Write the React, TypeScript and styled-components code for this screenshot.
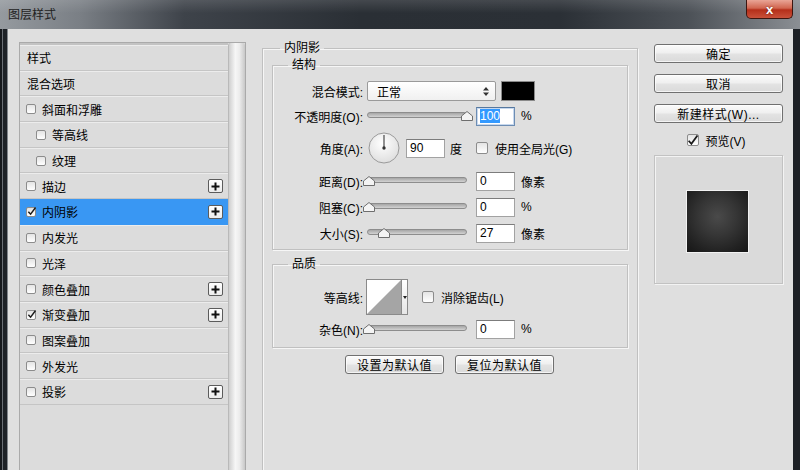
import React from 'react'
import styled, { createGlobalStyle } from 'styled-components'

const GlobalStyle = createGlobalStyle`
  html, body {
    margin: 0;
    padding: 0;
    background: #1f2328;
  }
`

const Page = styled.div`
  width: 800px;
  height: 470px;
  display: flex;
  flex-direction: column;
  overflow: hidden;
  background: #1d2126;
  font-family: "Liberation Sans", "Noto Sans CJK SC", sans-serif;
  font-size: 12px;
  color: #000;
`

const TitleBar = styled.div`
  height: 29px;
  flex: none;
  display: flex;
  align-items: flex-start;
  background:
    linear-gradient(180deg, rgba(255,255,255,0.12) 0%, rgba(255,255,255,0) 45%),
    linear-gradient(90deg, #959a9f 0%, #7a7f85 10%, #3e434a 23%, #2a2f35 45%, #2b3036 70%, #4c5157 86%, #8b8f94 100%);
`

const Title = styled.div`
  padding: 7px 0 0 8px;
  line-height: 16px;
  color: #222;
`

const CloseButton = styled.div`
  margin-left: auto;
  margin-right: 7px;
  width: 47px;
  height: 19px;
  box-sizing: border-box;
  display: flex;
  align-items: center;
  justify-content: center;
  border: 1px solid #3d1610;
  border-top: none;
  border-radius: 0 0 5px 5px;
  background: linear-gradient(180deg, #e9a596 0%, #d16650 45%, #b52f1a 55%, #c9513a 100%);
  color: #fff;
  font-weight: bold;
  font-size: 13px;
  text-shadow: 0 0 2px #5a1a10;
`

const Frame = styled.div`
  flex: 1;
  display: flex;
  padding: 0 7px;
  min-height: 0;
  background: linear-gradient(90deg, #15181c 0px, #15181c 2px, #6a6f75 2px, #6a6f75 3px, #1d2126 3px);
`

const Body = styled.div`
  flex: 1;
  display: flex;
  align-items: stretch;
  padding: 11px 0 0 11px;
  background: #dfdfdf;
  border-left: 1px solid #80858b;
  overflow: hidden;
`

/* ---------- left list ---------- */

const StylePanel = styled.div`
  width: 227px;
  box-sizing: border-box;
  margin-top: 2px;
  display: flex;
  border: 1px solid #aaaaaa;
  border-bottom: none;
  background: #dcdcdc;
`

const StyleList = styled.div`
  flex: 1;
  border-top: 2px solid #c3c3c3;
`

const StyleItem = styled.div<{ $indent: number; $active?: boolean }>`
  height: 25.7px;
  box-sizing: border-box;
  display: flex;
  align-items: center;
  padding-left: ${({ $indent }) => $indent}px;
  border-top: 1px solid ${({ $active }) => ($active ? '#3a97f2' : '#ececec')};
  border-bottom: 1px solid ${({ $active }) => ($active ? '#3a97f2' : '#c5c5c5')};
  background: ${({ $active }) => ($active ? '#3997f3' : 'transparent')};
  white-space: nowrap;
`

const ItemLabel = styled.span`
  margin-left: 6px;
`

const PlusButton = styled.div`
  margin-left: auto;
  margin-right: 5px;
  width: 15px;
  height: 14px;
  box-sizing: border-box;
  border: 1px solid #5c5c5c;
  border-radius: 2px;
  background: linear-gradient(180deg, #ffffff, #ececec);
  display: flex;
  align-items: center;
  justify-content: center;
`

const Scrollbar = styled.div`
  width: 16px;
  border-left: 1px solid #b9b9b9;
  border-radius: 3px 3px 0 0;
  background: linear-gradient(90deg, #cfcfcf 0%, #f6f6f6 40%, #ececec 65%, #c8c8c8 100%);
`

/* ---------- checkbox ---------- */

const Box = styled.span<{ $size: number }>`
  display: inline-flex;
  align-items: center;
  justify-content: center;
  flex: none;
  width: ${({ $size }) => $size}px;
  height: ${({ $size }) => $size}px;
  box-sizing: border-box;
  border: 1px solid #8c8c8c;
  border-radius: 2px;
  background: linear-gradient(180deg, #e4e4e4, #ffffff);
`

const CheckBox = ({ checked, size = 10 }: { checked?: boolean; size?: number }) => (
  <Box $size={size}>
    {checked && (
      <svg width={size - 1} height={size - 1} viewBox="0 0 10 10" style={{ overflow: 'visible' }}>
        <path d="M1.5 5.2 L4 8 L9.5 0.5" fill="none" stroke="#1a1a1a" strokeWidth="1.6" />
      </svg>
    )}
  </Box>
)

/* ---------- middle column ---------- */

const Middle = styled.div`
  width: 376px;
  margin-left: 16px;
  display: flex;
  flex-direction: column;
`

const Group = styled.fieldset<{ $pad?: string }>`
  margin: 0;
  padding: ${({ $pad }) => $pad || '0'};
  min-width: 0;
  border: 1px solid #c0c0c0;
  box-shadow: 1px 1px 0 #f6f6f6, inset 1px 1px 0 #f6f6f6;
`

const OuterGroup = styled(Group)`
  flex: 1;
  margin-bottom: -6px;
`

const QualityGroup = styled(Group)`
  margin-top: 6px;
`

const Legend = styled.legend<{ $offset: number }>`
  margin-left: ${({ $offset }) => $offset}px;
  padding: 0 4px;
  line-height: 16px;
  height: 16px;
`

const Row = styled.div<{ $h: number }>`
  height: ${({ $h }) => $h}px;
  display: grid;
  grid-template-columns: 90px 1fr;
  column-gap: 4px;
  align-items: center;
`

const RowLabel = styled.span`
  text-align: right;
  white-space: nowrap;
`

const Controls = styled.div`
  display: flex;
  align-items: center;
  white-space: nowrap;
`

const Select = styled.div`
  width: 129px;
  height: 20px;
  box-sizing: border-box;
  display: flex;
  align-items: center;
  padding: 0 6px 0 9px;
  border: 1px solid #9a9a9a;
  border-radius: 2px;
  background: linear-gradient(180deg, #ffffff, #f0f0f0);
  justify-content: space-between;
`

const Swatch = styled.div`
  width: 34px;
  height: 20px;
  box-sizing: border-box;
  margin-left: 5px;
  border: 1px solid #8a8a8a;
  background: #000;
`

const SliderBox = styled.div<{ $w: number }>`
  position: relative;
  width: ${({ $w }) => $w}px;
  height: 10px;
  flex: none;
`

const Track = styled.div`
  position: absolute;
  left: 0;
  right: 0;
  top: 1px;
  height: 4px;
  border: 1px solid #8d8d8d;
  border-radius: 3px;
  background: linear-gradient(180deg, #a6a6a6, #d2d2d2);
`

const Thumb = styled.svg`
  position: absolute;
  top: 0;
  margin-left: -6px;
`

const Slider = ({ value, width = 100 }: { value: number; width?: number }) => (
  <SliderBox $w={width}>
    <Track />
    <Thumb
      width="12"
      height="10"
      viewBox="0 0 12 10"
      style={{ left: `${2 + (value / 100) * (width - 2)}px` }}
    >
      <path d="M6 0.5 L11.5 5 L11.5 9.5 L0.5 9.5 L0.5 5 Z" fill="#f4f4f4" stroke="#6e6e6e" />
    </Thumb>
  </SliderBox>
)

const ValueBox = styled.div<{ $focus?: boolean; $gap?: number }>`
  width: 39px;
  height: 19px;
  box-sizing: border-box;
  margin-left: ${({ $gap }) => ($gap ?? 9)}px;
  padding: 0 3px;
  line-height: 17px;
  background: #fff;
  border: 1px solid ${({ $focus }) => ($focus ? '#6d8db3' : '#a2a2a2')};
  border-top-color: ${({ $focus }) => ($focus ? '#56789f' : '#7c7c7c')};
  box-shadow: ${({ $focus }) => ($focus ? 'inset 0 0 0 1px #c7d8ee' : 'none')};
`

const Selected = styled.span`
  background: #3399ff;
  color: #fff;
`

const Unit = styled.span<{ $gap?: number }>`
  margin-left: ${({ $gap }) => ($gap ?? 6)}px;
`

const InlineCheck = styled.label<{ $gap: number }>`
  display: flex;
  align-items: center;
  gap: 7px;
  margin-left: ${({ $gap }) => $gap}px;
`

const Contour = styled.div`
  display: flex;
  height: 36px;
  flex: none;
  margin-left: -1px;
`

const ContourSwatch = styled.div`
  width: 36px;
  height: 36px;
  box-sizing: border-box;
  border: 1px solid #8a8a8a;
  background: #fff;
`

const ContourArrow = styled.div`
  width: 6px;
  box-sizing: border-box;
  border: 1px solid #8a8a8a;
  border-left: none;
  background: linear-gradient(180deg, #ffffff, #e6e6e6);
  display: flex;
  align-items: center;
  justify-content: center;
`

const ButtonRow = styled.div`
  display: flex;
  justify-content: center;
  gap: 11px;
  margin-top: 7px;
  padding-right: 1px;
`

const Button = styled.div<{ $w?: number }>`
  width: ${({ $w }) => ($w ? `${$w}px` : '100%')};
  height: 19px;
  box-sizing: border-box;
  display: flex;
  align-items: center;
  justify-content: center;
  border: 1px solid #707070;
  border-radius: 3px;
  background: linear-gradient(180deg, #fbfbfb 0%, #efefef 48%, #e3e3e3 52%, #dadada 100%);
  box-shadow: inset 0 0 0 1px rgba(255,255,255,0.7);
  white-space: nowrap;
  letter-spacing: 0.5px;
`

/* ---------- right column ---------- */

const Side = styled.div`
  width: 129px;
  margin-left: 16px;
  padding-top: 4px;
  display: flex;
  flex-direction: column;
  gap: 11px;
`

const PreviewToggle = styled.label`
  height: 18px;
  margin-top: -3px;
  display: flex;
  align-items: center;
  justify-content: center;
  gap: 7px;
  padding-right: 5px;
`

const PreviewFrame = styled.div`
  height: 129px;
  margin-top: -5px;
  box-sizing: border-box;
  display: flex;
  align-items: center;
  justify-content: center;
  padding: 4px 3px 0 0;
  border: 1px solid #c2c2c2;
  box-shadow: inset 1px 1px 0 #f3f3f3, 1px 1px 0 #f3f3f3;
  background: #dadada;
`

const PreviewSquare = styled.div`
  width: 63px;
  height: 63px;
  box-sizing: border-box;
  border: 1px solid #f2f2f2;
  background: radial-gradient(circle at 50% 42%, #4a4a4a 0%, #363636 40%, #222 75%, #161616 100%);
`

const Dial = () => (
  <svg width="32" height="32" viewBox="0 0 32 32" style={{ flex: 'none', marginLeft: 1 }}>
    <defs>
      <radialGradient id="dialFill" cx="45%" cy="35%" r="70%">
        <stop offset="0%" stopColor="#ffffff" />
        <stop offset="100%" stopColor="#dcdcdc" />
      </radialGradient>
    </defs>
    <circle cx="16" cy="16" r="15" fill="url(#dialFill)" stroke="#9a9a9a" />
    <line x1="16" y1="16" x2="16" y2="3" stroke="#4a4a4a" strokeWidth="1.2" />
    <circle cx="16" cy="16" r="1.7" fill="#333" />
  </svg>
)

type Item = {
  label: string
  head?: boolean
  sub?: boolean
  checked?: boolean
  plus?: boolean
  active?: boolean
}

const items: Item[] = [
  { label: '样式', head: true },
  { label: '混合选项', head: true },
  { label: '斜面和浮雕' },
  { label: '等高线', sub: true },
  { label: '纹理', sub: true },
  { label: '描边', plus: true },
  { label: '内阴影', checked: true, plus: true, active: true },
  { label: '内发光' },
  { label: '光泽' },
  { label: '颜色叠加', plus: true },
  { label: '渐变叠加', checked: true, plus: true },
  { label: '图案叠加' },
  { label: '外发光' },
  { label: '投影', plus: true },
]

const Plus = () => (
  <PlusButton>
    <svg width="9" height="9" viewBox="0 0 9 9">
      <path d="M4.5 0.5 V8.5 M0.5 4.5 H8.5" stroke="#111" strokeWidth="2" />
    </svg>
  </PlusButton>
)

export default function App() {
  return (
    <Page>
      <GlobalStyle />
      <TitleBar>
        <Title>图层样式</Title>
        <CloseButton>x</CloseButton>
      </TitleBar>
      <Frame>
        <Body>
          <StylePanel>
            <StyleList>
              {items.map((it) => (
                <StyleItem key={it.label} $indent={it.head ? 7 : it.sub ? 16 : 6} $active={it.active}>
                  {it.head ? (
                    <span>{it.label}</span>
                  ) : (
                    <>
                      <CheckBox checked={it.checked} />
                      <ItemLabel>{it.label}</ItemLabel>
                    </>
                  )}
                  {it.plus && <Plus />}
                </StyleItem>
              ))}
            </StyleList>
            <Scrollbar />
          </StylePanel>

          <Middle>
            <OuterGroup $pad="1px 9px 0 9px">
              <Legend $offset={8}>内阴影</Legend>
              <Group $pad="6px 0 2px 0">
                <Legend $offset={15}>结构</Legend>
                <Row $h={24}>
                  <RowLabel>混合模式:</RowLabel>
                  <Controls>
                    <Select>
                      <span>正常</span>
                      <svg width="6" height="9" viewBox="0 0 6 9">
                        <path d="M3 0 L6 3.5 H0 Z M3 9 L6 5.5 H0 Z" fill="#333" />
                      </svg>
                    </Select>
                    <Swatch />
                  </Controls>
                </Row>
                <Row $h={26}>
                  <RowLabel>不透明度(O):</RowLabel>
                  <Controls>
                    <Slider value={100} />
                    <ValueBox $focus>
                      <Selected>100</Selected>
                    </ValueBox>
                    <Unit>%</Unit>
                  </Controls>
                </Row>
                <Row $h={38}>
                  <RowLabel>角度(A):</RowLabel>
                  <Controls>
                    <Dial />
                    <ValueBox $gap={6}>90</ValueBox>
                    <Unit $gap={5}>度</Unit>
                    <InlineCheck $gap={14}>
                      <CheckBox size={12} />
                      <span>使用全局光(G)</span>
                    </InlineCheck>
                  </Controls>
                </Row>
                <Row $h={28}>
                  <RowLabel>距离(D):</RowLabel>
                  <Controls>
                    <Slider value={0} />
                    <ValueBox>0</ValueBox>
                    <Unit>像素</Unit>
                  </Controls>
                </Row>
                <Row $h={24}>
                  <RowLabel>阻塞(C):</RowLabel>
                  <Controls>
                    <Slider value={0} />
                    <ValueBox>0</ValueBox>
                    <Unit>%</Unit>
                  </Controls>
                </Row>
                <Row $h={28}>
                  <RowLabel>大小(S):</RowLabel>
                  <Controls>
                    <Slider value={15} />
                    <ValueBox>27</ValueBox>
                    <Unit>像素</Unit>
                  </Controls>
                </Row>
              </Group>

              <QualityGroup $pad="6px 0 5px 0">
                <Legend $offset={15}>品质</Legend>
                <Row $h={38}>
                  <RowLabel>等高线:</RowLabel>
                  <Controls>
                    <Contour>
                      <ContourSwatch>
                        <svg width="34" height="34" viewBox="0 0 34 34">
                          <path d="M0 34 L34 0 L34 34 Z" fill="#a5a5a5" />
                        </svg>
                      </ContourSwatch>
                      <ContourArrow>
                        <svg width="4" height="3" viewBox="0 0 4 3">
                          <path d="M0 0 H4 L2 3 Z" fill="#222" />
                        </svg>
                      </ContourArrow>
                    </Contour>
                    <InlineCheck $gap={14}>
                      <CheckBox size={12} />
                      <span>消除锯齿(L)</span>
                    </InlineCheck>
                  </Controls>
                </Row>
                <Row $h={26}>
                  <RowLabel>杂色(N):</RowLabel>
                  <Controls>
                    <Slider value={0} />
                    <ValueBox>0</ValueBox>
                    <Unit>%</Unit>
                  </Controls>
                </Row>
              </QualityGroup>

              <ButtonRow>
                <Button $w={99}>设置为默认值</Button>
                <Button $w={99}>复位为默认值</Button>
              </ButtonRow>
            </OuterGroup>
          </Middle>

          <Side>
            <Button>确定</Button>
            <Button>取消</Button>
            <Button>新建样式(W)...</Button>
            <PreviewToggle>
              <CheckBox checked size={12} />
              <span>预览(V)</span>
            </PreviewToggle>
            <PreviewFrame>
              <PreviewSquare />
            </PreviewFrame>
          </Side>
        </Body>
      </Frame>
    </Page>
  )
}
